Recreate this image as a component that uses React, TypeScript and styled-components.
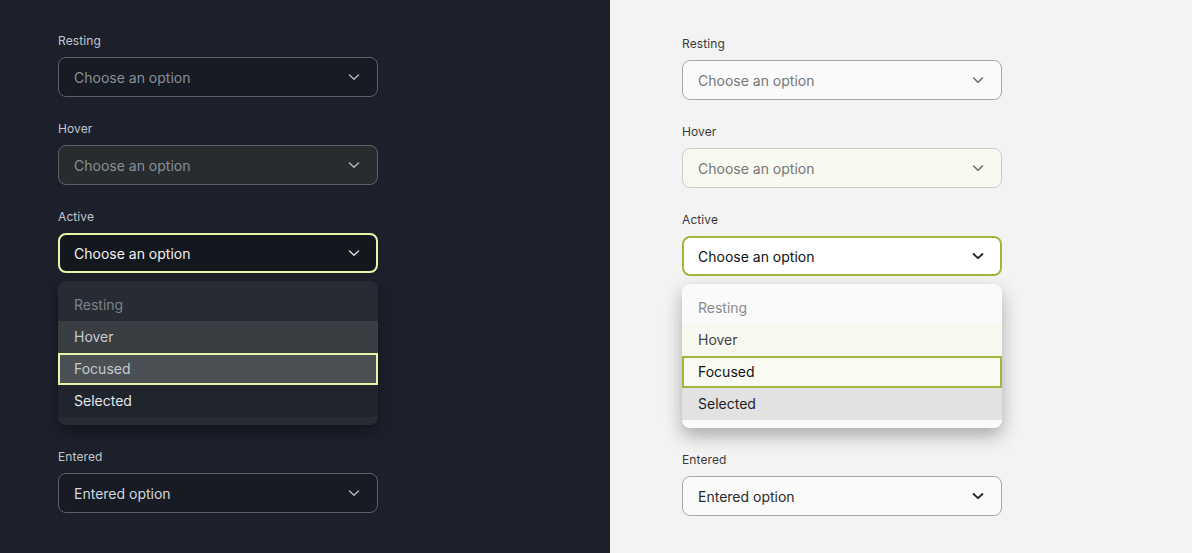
import styled, { createGlobalStyle, css } from 'styled-components'

const GlobalStyle = createGlobalStyle`
	html, body {
		margin: 0;
		padding: 0;
		height: 100%;
	}
	body {
		font-family: Inter, "Noto Sans", sans-serif;
		-webkit-font-smoothing: antialiased;
	}
`

type Mode = 'dark' | 'light'
type FieldState = 'resting' | 'hover' | 'active' | 'entered'
type ItemState = 'resting' | 'hover' | 'focused' | 'selected'

const palette = {
	dark: {
		page: '#1b202b',
		label: '#c3c7cd',
		placeholder: '#8a8f97',
		value: '#d3d6da',
		activeValue: '#f1f2f3',
		boxBg: '#161b24',
		boxBorder: '#5b616b',
		hoverBg: '#272c2e',
		hoverBorder: '#5b616b',
		activeBg: '#13171e',
		accent: '#e7f6a4',
		chevron: '#b5b9bf',
		activeChevron: '#d8dbdf',
		menuBg: '#262b34',
		menuShadow: '0 6px 14px rgba(0, 0, 0, 0.35)',
		items: {
			resting: { bg: 'transparent', color: '#7c818a' },
			hover: { bg: '#393e42', color: '#c7cacf' },
			focused: { bg: '#4a5053', color: '#c7cacf' },
			selected: { bg: '#20242c', color: '#e4e6e9' },
		},
	},
	light: {
		page: '#f3f3f3',
		label: '#3a3a3a',
		placeholder: '#767676',
		value: '#2a2a2a',
		activeValue: '#111111',
		boxBg: '#fafafa',
		boxBorder: '#a7a9b0',
		hoverBg: '#f8f9f1',
		hoverBorder: '#c9cacc',
		activeBg: '#ffffff',
		accent: '#a2b63b',
		chevron: '#666666',
		activeChevron: '#1e1e1e',
		menuBg: '#fafafa',
		menuShadow: '0 8px 18px rgba(0, 0, 0, 0.3)',
		items: {
			resting: { bg: 'transparent', color: '#8a8a8a' },
			hover: { bg: '#f7f8f0', color: '#444444' },
			focused: { bg: '#f9faf2', color: '#111111' },
			selected: { bg: '#e2e2e2', color: '#1e1e1e' },
		},
	},
}

const Page = styled.div`
	display: flex;
	width: 1192px;
	height: 553px;
	overflow: hidden;
`

const Panel = styled.section<{ $mode: Mode }>`
	display: flex;
	flex-direction: column;
	gap: 24px;
	box-sizing: border-box;
	background: ${(p) => palette[p.$mode].page};
	width: ${(p) => (p.$mode === 'dark' ? '610px' : '582px')};
	padding: ${(p) => (p.$mode === 'dark' ? '33px 0 0 58px' : '36px 0 0 72px')};
`

const Field = styled.div`
	display: flex;
	flex-direction: column;
	gap: 8px;
	width: 320px;
`

const Label = styled.div<{ $mode: Mode }>`
	font-size: 12px;
	line-height: 16px;
	letter-spacing: 0.1px;
	color: ${(p) => palette[p.$mode].label};
`

const Box = styled.div<{ $mode: Mode; $state: FieldState }>`
	display: flex;
	align-items: center;
	justify-content: space-between;
	box-sizing: border-box;
	height: 40px;
	padding: 0 17px 0 15px;
	border-radius: 8px;
	font-size: 14px;
	${(p) => {
		const c = palette[p.$mode]
		switch (p.$state) {
			case 'hover':
				return css`
					background: ${c.hoverBg};
					border: 1px solid ${c.hoverBorder};
					color: ${c.placeholder};
				`
			case 'active':
				return css`
					background: ${c.activeBg};
					border: 2px solid ${c.accent};
					padding: 0 16px 0 14px;
					color: ${c.activeValue};
				`
			case 'entered':
				return css`
					background: ${c.boxBg};
					border: 1px solid ${c.boxBorder};
					color: ${c.value};
				`
			default:
				return css`
					background: ${c.boxBg};
					border: 1px solid ${c.boxBorder};
					color: ${c.placeholder};
				`
		}
	}}
`

const Chevron = styled.svg<{ $color: string }>`
	width: 12px;
	height: 12px;
	color: ${(p) => p.$color};
	flex-shrink: 0;
`

const Menu = styled.ul<{ $mode: Mode }>`
	list-style: none;
	margin: 0;
	padding: 8px 0;
	border-radius: 8px;
	background: ${(p) => palette[p.$mode].menuBg};
	box-shadow: ${(p) => palette[p.$mode].menuShadow};
	overflow: hidden;
`

const Item = styled.li<{ $mode: Mode; $state: ItemState }>`
	box-sizing: border-box;
	height: 32px;
	display: flex;
	align-items: center;
	padding: 0 16px 2px;
	font-size: 14px;
	background: ${(p) => palette[p.$mode].items[p.$state].bg};
	color: ${(p) => palette[p.$mode].items[p.$state].color};
	${(p) =>
		p.$state === 'focused' &&
		css`
			border: 2px solid ${palette[p.$mode].accent};
			padding: 0 14px 2px;
		`}
`

const ChevronIcon = ({ color, bold }: { color: string; bold?: boolean }) => (
	<Chevron $color={color} viewBox="0 0 12 12" fill="none">
		<path
			d="M1.5 4 L6 8.2 L10.5 4"
			stroke="currentColor"
			strokeWidth={bold ? 1.8 : 1.4}
			strokeLinecap="round"
			strokeLinejoin="round"
		/>
	</Chevron>
)

function Select({ mode, state, label, text }: { mode: Mode; state: FieldState; label: string; text: string }) {
	const c = palette[mode]
	const strong = state === 'active' || (mode === 'light' && state === 'entered')
	return (
		<Field>
			<Label $mode={mode}>{label}</Label>
			<Box $mode={mode} $state={state}>
				<span>{text}</span>
				<ChevronIcon color={strong ? c.activeChevron : c.chevron} bold={mode === 'light' && strong} />
			</Box>
			{state === 'active' && (
				<Menu $mode={mode}>
					<Item $mode={mode} $state="resting">Resting</Item>
					<Item $mode={mode} $state="hover">Hover</Item>
					<Item $mode={mode} $state="focused">Focused</Item>
					<Item $mode={mode} $state="selected">Selected</Item>
				</Menu>
			)}
		</Field>
	)
}

function Column({ mode }: { mode: Mode }) {
	return (
		<Panel $mode={mode}>
			<Select mode={mode} state="resting" label="Resting" text="Choose an option" />
			<Select mode={mode} state="hover" label="Hover" text="Choose an option" />
			<Select mode={mode} state="active" label="Active" text="Choose an option" />
			<Select mode={mode} state="entered" label="Entered" text="Entered option" />
		</Panel>
	)
}

export default function App() {
	return (
		<>
			<GlobalStyle />
			<Page>
				<Column mode="dark" />
				<Column mode="light" />
			</Page>
		</>
	)
}
